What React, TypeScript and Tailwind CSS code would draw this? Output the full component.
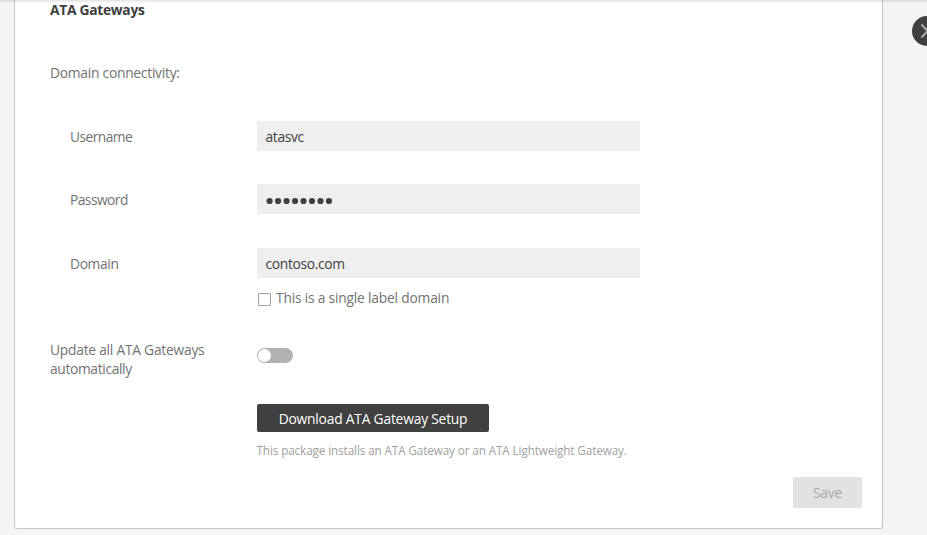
import type { ReactNode } from "react";

function Field({ label, children }: { label: ReactNode; children: ReactNode }) {
  return (
    <div className="flex h-[30px] items-center">
      <div className="w-[207px] pl-5 pt-[2px] leading-5">{label}</div>
      <div className="flex h-[30px] w-[383px] items-center bg-[#efefef] pl-[8.5px] pt-[2px] leading-5 text-[#404040]">
        {children}
      </div>
    </div>
  );
}

export default function App() {
  return (
    <div className="relative h-[535px] w-[927px] overflow-hidden bg-[#f4f4f4] pl-[14px] font-['Open_Sans','Noto_Sans',sans-serif] text-[13.8px] text-[#727272]">
      <main className="h-[529px] w-[869px] rounded-b-[3px] border border-t-0 border-[#c6c6c6] bg-white pl-[35px]">
        <h1 className="h-[63px] text-[13.8px] font-bold leading-5 text-[#404040]">
          <span className="tracking-[-0.28px]">ATA Gateways</span>
        </h1>
        <p className="h-[58px] leading-5">
          <span className="tracking-[-0.25px]">Domain connectivity:</span>
        </p>
        <Field label={<span className="tracking-[-0.55px]">Username</span>}>
          <span className="tracking-[-0.35px]">atasvc</span>
        </Field>
        <div className="h-[33px]" />
        <Field label={<span className="tracking-[-0.55px]">Password</span>}>
          <svg className="mt-[2px] h-[8px] w-[70px]" fill="#404040" aria-label="Password">
            {Array.from({ length: 8 }, (_, i) => (
              <circle key={i} cx={3.6 + i * 8.48} cy="4" r="3.1" />
            ))}
          </svg>
        </Field>
        <div className="h-[34px]" />
        <Field label={<span className="tracking-[-0.35px]">Domain</span>}>
          <span className="tracking-[-0.33px]">contoso.com</span>
        </Field>
        <label className="ml-[207px] mt-[10px] flex h-5 items-center gap-[5px] pl-px leading-5">
          <span className="mt-[2px] size-[13px] rounded-[1px] border border-[#a0a0a0] bg-white" />
          <span className="tracking-[-0.2px]">This is a single label domain</span>
        </label>
        <div className="mt-[32px] flex h-[38px]">
          <div className="w-[207px] leading-[19px]">
            <span className="tracking-[-0.24px]">Update all ATA Gateways</span>
            <br />
            <span className="tracking-[-0.35px]">automatically</span>
          </div>
          <div className="mt-[8px] flex h-[15px] w-[36px] items-center rounded-full bg-[#b2b2b2] pl-px">
            <span className="size-[13px] rounded-full bg-white" />
          </div>
        </div>
        <button className="ml-[207px] mt-[26px] flex h-[28px] w-[232px] items-center justify-center rounded-[2px] bg-[#404040] pt-[2px] leading-5 text-white">
          <span className="tracking-[-0.2px]">Download ATA Gateway Setup</span>
        </button>
        <p className="ml-[206.5px] mt-[9px] h-[18px] text-[11.7px] leading-[18px] text-[#a0a0a0]">
          <span className="tracking-[-0.1px]">This package installs an ATA Gateway or an ATA Lightweight Gateway.</span>
        </p>
        <button className="ml-[743px] mt-[18px] flex h-[31px] w-[69px] items-center justify-center rounded-[1px] bg-[#e2e2e2] pt-[1px] leading-5 text-[#a8a8a8]">
          <span className="tracking-[-0.2px]">Save</span>
        </button>
      </main>
      <div className="absolute inset-x-0 top-0 h-[3px] bg-linear-to-b from-black/12 to-transparent" />
      <div className="absolute left-[912px] top-[16px] size-[30px] rounded-full bg-[#404040]">
        <svg className="size-[30px]" viewBox="0 0 30 30" fill="none" stroke="#aaa" strokeWidth="2">
          <path d="M9.5 8.5L15.5 15L9.5 21.5" />
        </svg>
      </div>
    </div>
  );
}
